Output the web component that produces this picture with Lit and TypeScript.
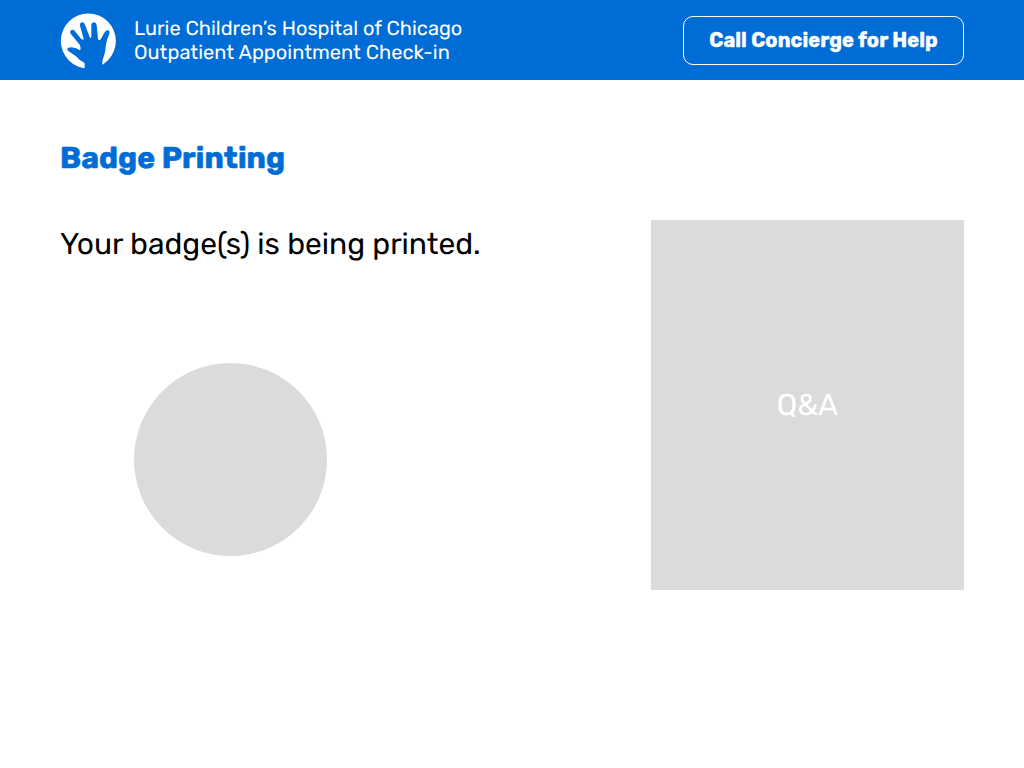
import { LitElement, html, css } from "lit";
import { customElement } from "lit/decorators.js";

@customElement("app-root")
class AppRoot extends LitElement {
  static styles = css`
    :host { display: block; height: 768px; background: #fff; font-family: Rubik, Roboto, "Liberation Sans", sans-serif; color: #000; overflow: hidden; text-rendering: geometricPrecision; }
    * { box-sizing: border-box; }
    .bar { height: 80px; padding: 0 60px; background: #006dd7; color: #fff; display: flex; align-items: center; }
    .logo { width: 56px; height: 56px; flex: none; margin-right: 18px; margin-top: 1px; }
    .title { font-size: 20px; line-height: 24px; flex: 1; white-space: nowrap; }
    .sub { letter-spacing: 0.02px; }
    .help { width: 281px; height: 49px; margin-top: 1px; padding: 0; border: 1px solid #fff; border-radius: 10px; background: none; color: #fff; font: 700 20px/47px Rubik, Roboto, sans-serif; letter-spacing: 0.08px; -webkit-text-stroke: 0.4px #fff; text-align: center; white-space: nowrap; }
    .main { padding: 60px 60px 0; }
    h1 { margin: 0; font-size: 30px; line-height: 36px; font-weight: 700; color: #006dd7; letter-spacing: 0.12px; -webkit-text-stroke: 0.6px #006dd7; white-space: nowrap; }
    .content { display: flex; justify-content: space-between; margin-top: 44px; }
    .msg { margin: 0; padding-top: 6px; font-size: 30px; line-height: 36px; letter-spacing: -0.03px; white-space: nowrap; }
    .disc { width: 193px; height: 193px; border-radius: 50%; background: #dbdbdb; margin: 101px 0 0 74px; }
    .qa { width: 313px; height: 370px; background: #dbdbdb; color: #fff; font-size: 30px; display: flex; align-items: center; justify-content: center; }
  `;

  render() {
    return html`
      <header class="bar">
        <svg class="logo" viewBox="18 14 168 168">
          <circle cx="103" cy="98" r="82.5" fill="#fff" />
          <path fill="#006dd7" d="M77 109L50 76Q46 67 53 65Q60 63 64 70L82 92Q86 96 89 91L78 52Q77 43 84 42Q91 42 93 49L107 86Q110 92 112 86L112 49Q113 42 120 42Q127 42 128 50L132 91Q135 99 140 93L153 70Q157 64 163 66Q168 69 166 77Q157 96 155 114Q155 130 150 142Q145 153 145 165L143 186H90Q94 172 91 163Q77 158 66 144Q57 138 44 129Q36 122 43 118Q60 114 78 126Q82 120 77 109Z" />
        </svg>
        <div class="title">
          <div>Lurie Children’s Hospital of Chicago</div>
          <div class="sub">Outpatient Appointment Check-in</div>
        </div>
        <button class="help">Call Concierge for Help</button>
      </header>
      <main class="main">
        <h1>Badge Printing</h1>
        <div class="content">
          <div>
            <p class="msg">Your badge(s) is being printed.</p>
            <div class="disc"></div>
          </div>
          <div class="qa">Q&amp;A</div>
        </div>
      </main>
    `;
  }
}
